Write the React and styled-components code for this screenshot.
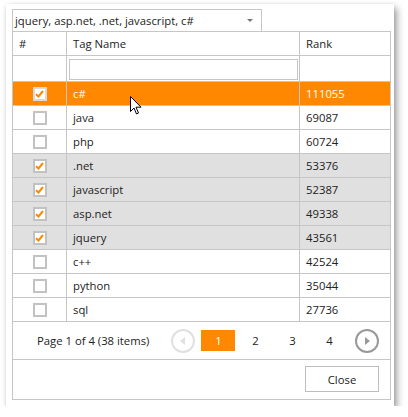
import React from 'react';
import styled, { createGlobalStyle } from 'styled-components';

const GlobalStyle = createGlobalStyle`
    body {
        margin: 0;
        background: #fff;
        font-family: "Open Sans", "Liberation Sans", sans-serif;
        font-size: 11.3px;
        color: #333;
    }
`;

const Panel = styled.div`
    position: relative;
    margin: 4px 0 0 6px;
    width: 388px;
    padding: 5px 4px 6px 6px;
    box-sizing: border-box;
    background: #fff;
    box-shadow: 3px 4px 7px rgba(0, 0, 0, 0.38), 0 0 3px rgba(0, 0, 0, 0.08);
`;

const Dropdown = styled.div`
    width: 250px;
    height: 22px;
    box-sizing: border-box;
    border: 1px solid #c6c6c6;
    border-bottom: none;
    display: flex;
    align-items: center;
    padding: 0 8px 0 2px;
    color: #222;
`;

const DropText = styled.span`
    flex: 1;
    white-space: nowrap;
`;

const Caret = styled.span`
    width: 0;
    height: 0;
    border-left: 3px solid transparent;
    border-right: 3px solid transparent;
    border-top: 3px solid #777;
`;

const Grid = styled.div`
    width: 379px;
    box-sizing: border-box;
    border: 1px solid #c6c6c6;
`;

const Row = styled.div`
    display: grid;
    grid-template-columns: 54px 233px 1fr;
    height: ${p => p.$h || 24}px;
    box-sizing: border-box;
    border-bottom: 1px solid #c6c6c6;
    background: ${p => (p.$hover ? '#ff8800' : p.$checked ? '#e0e0e0' : '#fff')};
    color: ${p => (p.$hover ? '#fff' : '#222')};
`;

const Cell = styled.div`
    display: flex;
    align-items: center;
    justify-content: ${p => (p.$center ? 'center' : 'flex-start')};
    padding: ${p => p.$pad || '0 6px'};
    border-right: ${p => (p.$last ? 'none' : '1px solid #c6c6c6')};
    white-space: nowrap;
`;

const FilterInput = styled.div`
    flex: 1;
    height: 21px;
    box-sizing: border-box;
    border: 1px solid #c6c6c6;
    background: #fff;
`;

const Check = styled.span`
    width: 14px;
    height: 14px;
    box-sizing: border-box;
    border: 2px solid ${p => (p.$light ? '#d9d9d9' : '#c2c2c2')};
    background: #fff;
    display: flex;
    align-items: center;
    justify-content: center;
`;

const Pager = styled.div`
    height: 38px;
    box-sizing: border-box;
    border-bottom: 1px solid #c6c6c6;
    display: flex;
    align-items: center;
    padding-left: 24px;
    color: #222;
`;

const PageInfo = styled.span`
    margin-right: 22px;
    white-space: nowrap;
`;

const CircleBtn = styled.span`
    width: 24px;
    height: 24px;
    box-sizing: border-box;
    border-radius: 50%;
    border: 2px solid ${p => (p.$disabled ? '#e0e0e0' : '#999')};
    display: flex;
    align-items: center;
    justify-content: center;
    margin: ${p => p.$margin};
`;

const PageNum = styled.span`
    width: 34px;
    height: 21px;
    display: flex;
    align-items: center;
    justify-content: center;
    margin-right: 3px;
    background: ${p => (p.$active ? '#ff8800' : 'transparent')};
    color: ${p => (p.$active ? '#fff' : '#222')};
`;

const Footer = styled.div`
    height: 39px;
    display: flex;
    justify-content: flex-end;
    padding: 6px 11px 0 0;
    box-sizing: border-box;
`;

const Button = styled.span`
    width: 74px;
    height: 26px;
    box-sizing: border-box;
    border: 1px solid #bdbdbd;
    display: flex;
    align-items: center;
    justify-content: center;
    color: #222;
`;

const Cursor = styled.svg`
    position: absolute;
    left: 124px;
    top: 92px;
`;

const rows = [
    ['c#', '111055', true],
    ['java', '69087', false],
    ['php', '60724', false],
    ['.net', '53376', true],
    ['javascript', '52387', true],
    ['asp.net', '49338', true],
    ['jquery', '43561', true],
    ['c++', '42524', false],
    ['python', '35044', false],
    ['sql', '27736', false],
];

function Tick() {
    return (
        <svg width="9" height="8" viewBox="0 0 9 8">
            <path d="M1 4.2 L3.5 6.5 L8 1" fill="none" stroke="#ff8800" strokeWidth="2" />
        </svg>
    );
}

export default function App() {
    return (
        <>
            <GlobalStyle />
            <Panel>
                <Dropdown>
                    <DropText>jquery, asp.net, .net, javascript, c#</DropText>
                    <Caret />
                </Dropdown>
                <Grid>
                    <Row>
                        <Cell>#</Cell>
                        <Cell>Tag Name</Cell>
                        <Cell $last>Rank</Cell>
                    </Row>
                    <Row $h={26}>
                        <Cell />
                        <Cell $pad="2px 1px 1px 2px">
                            <FilterInput />
                        </Cell>
                        <Cell $last />
                    </Row>
                    {rows.map(([name, rank, checked], i) => (
                        <Row key={name} $checked={checked} $hover={i === 0}>
                            <Cell $center>
                                <Check $light={i === 0}>{checked && <Tick />}</Check>
                            </Cell>
                            <Cell>{name}</Cell>
                            <Cell $last>{rank}</Cell>
                        </Row>
                    ))}
                    <Pager>
                        <PageInfo>Page 1 of 4 (38 items)</PageInfo>
                        <CircleBtn $disabled $margin="0 6px 0 0">
                            <svg width="6" height="8" viewBox="0 0 6 8">
                                <path d="M5 0 L0 4 L5 8 Z" fill="#e0e0e0" />
                            </svg>
                        </CircleBtn>
                        <PageNum $active>1</PageNum>
                        <PageNum>2</PageNum>
                        <PageNum>3</PageNum>
                        <PageNum>4</PageNum>
                        <CircleBtn $margin="0 0 0 6px">
                            <svg width="6" height="8" viewBox="0 0 6 8">
                                <path d="M1 0 L6 4 L1 8 Z" fill="#999" />
                            </svg>
                        </CircleBtn>
                    </Pager>
                    <Footer>
                        <Button>Close</Button>
                    </Footer>
                </Grid>
                <Cursor width="12" height="19" viewBox="0 0 12 19">
                    <path
                        d="M0.5 0.5 L0.5 15.5 L4 12 L6.5 18 L8.5 17 L6 11.2 L11 11.2 Z"
                        fill="#fff"
                        stroke="#000"
                        strokeWidth="1"
                        strokeLinejoin="round"
                    />
                </Cursor>
            </Panel>
        </>
    );
}
